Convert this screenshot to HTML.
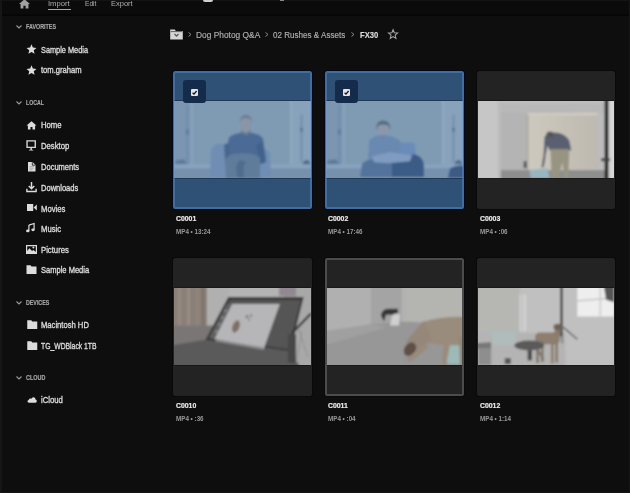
<!DOCTYPE html>
<html><head><meta charset="utf-8">
<style>
html,body{margin:0;padding:0;}
body{width:630px;height:493px;background:#0e0e0e;position:relative;overflow:hidden;font-family:"Liberation Sans",sans-serif;}
.a{position:absolute;white-space:nowrap;line-height:10px;transform-origin:0 0;}
.ico{position:absolute;overflow:visible;}
.menu{font-size:7.8px;color:#b0b0b0;}
.sec{font-size:6.8px;font-weight:bold;color:#a8a8a8;-webkit-text-stroke:0.15px #a8a8a8;}
.item{font-size:9.2px;color:#dcdcdc;-webkit-text-stroke:0.35px #dcdcdc;}
.card{position:absolute;width:139px;height:138px;background:#232323;border-radius:2.5px;box-shadow:0 0 0 1px #0a0a0a;}
.card.sel{background:#2e5175;box-shadow:0 0 0 1px #040918;}
.bd{position:absolute;left:0;top:0;width:135px;height:134px;border:2px solid transparent;border-radius:2.5px;z-index:2;}
.sel .bd{border-color:rgba(105,155,230,0.38);}
.hov .bd{border-color:#4c4c4c;}
.img{position:absolute;left:1px;top:30px;width:137px;height:77px;overflow:hidden;box-shadow:0 -1px 0 rgba(0,0,0,0.3),0 1px 0 rgba(0,0,0,0.3);}
.title{font-size:8px;font-weight:bold;color:#ececec;-webkit-text-stroke:0.2px #ececec;}
.sub{font-size:6.6px;font-weight:bold;color:#999;}
.crumb{font-size:8.5px;color:#b0b0b0;-webkit-text-stroke:0.15px #b0b0b0;}
</style></head>
<body>
<div style="position:absolute;left:0;top:0;width:630px;height:14px;background:#0b0b0b"></div>
<div style="position:absolute;left:0;top:0;width:630px;height:1px;background:#131313"></div>
<div style="position:absolute;left:0;top:14px;width:630px;height:2px;background:#060606"></div>
<div style="position:absolute;left:203px;top:0;width:10px;height:2px;border-radius:0 0 5px 5px;background:#cfcfcf"></div>
<div style="position:absolute;left:280px;top:0;width:4px;height:1px;background:#888"></div>
<div style="position:absolute;left:0;top:0;width:2px;height:493px;background:#161616"></div>
<div style="position:absolute;left:0;top:492px;width:630px;height:1px;background:#151515"></div>
<div style="position:absolute;left:629px;top:0;width:1px;height:493px;background:#151515"></div>
<svg class="ico" style="left:19px;top:-1px" width="11" height="10" viewBox="0 0 10 9" ><path d="M5 0.2 L10 4.6 L8.6 4.6 L8.6 8.5 L6 8.5 L6 6 L4 6 L4 8.5 L1.4 8.5 L1.4 4.6 L0 4.6 Z" fill="#a0a0a0"/></svg>
<div class="a menu" style="left:48px;top:-0.8px;transform:scaleX(0.98);">Import</div>
<div style="position:absolute;left:48px;top:9px;width:23px;height:1px;background:#a8a8a8"></div>
<div class="a menu" style="left:85px;top:-0.8px;transform:scaleX(0.85);">Edit</div>
<div class="a menu" style="left:111px;top:-0.8px;transform:scaleX(0.96);">Export</div>
<svg class="ico" style="left:15.5px;top:24.8px" width="6" height="4" viewBox="0 0 6 4" ><path d="M0.5 0.5 L3 3 L5.5 0.5" fill="none" stroke="#9a9a9a" stroke-width="1.1"/></svg>
<div class="a sec" style="left:25.5px;top:21.7px;transform:scaleX(0.79);">FAVORITES</div>
<svg class="ico" style="left:25.6px;top:44px" width="11" height="10.2" viewBox="0 0 10 9.6" ><path d="M5 0.3 L6.3 3.4 L9.7 3.7 L7.1 5.9 L7.9 9.3 L5 7.5 L2.1 9.3 L2.9 5.9 L0.3 3.7 L3.7 3.4 Z" fill="#dcdcdc"/></svg>
<div class="a item" style="left:41px;top:44.6px;transform:scaleX(0.8);">Sample Media</div>
<svg class="ico" style="left:25.6px;top:64.9px" width="11" height="10.2" viewBox="0 0 10 9.6" ><path d="M5 0.3 L6.3 3.4 L9.7 3.7 L7.1 5.9 L7.9 9.3 L5 7.5 L2.1 9.3 L2.9 5.9 L0.3 3.7 L3.7 3.4 Z" fill="#dcdcdc"/></svg>
<div class="a item" style="left:41px;top:65.3px;transform:scaleX(0.83);">tom.graham</div>
<svg class="ico" style="left:15.5px;top:101.0px" width="6" height="4" viewBox="0 0 6 4" ><path d="M0.5 0.5 L3 3 L5.5 0.5" fill="none" stroke="#9a9a9a" stroke-width="1.1"/></svg>
<div class="a sec" style="left:25.5px;top:97.9px;transform:scaleX(0.76);">LOCAL</div>
<svg class="ico" style="left:26.3px;top:121px" width="11" height="8.5" viewBox="0 0 10 8.5" ><path d="M5 0.2 L10 4.6 L8.6 4.6 L8.6 8.5 L6 8.5 L6 6 L4 6 L4 8.5 L1.4 8.5 L1.4 4.6 L0 4.6 Z" fill="#dcdcdc"/></svg>
<div class="a item" style="left:41px;top:120.10000000000001px;transform:scaleX(0.84);">Home</div>
<svg class="ico" style="left:26.3px;top:140px" width="10.3" height="11" viewBox="0 0 10 10.5" ><path d="M1 0.8 H9 V7 H1 Z" fill="none" stroke="#dcdcdc" stroke-width="1.3"/><path d="M4.3 7 H5.7 V9.3 H7 V10.2 H3 V9.3 H4.3 Z" fill="#dcdcdc"/></svg>
<div class="a item" style="left:41px;top:140.79999999999998px;transform:scaleX(0.84);">Desktop</div>
<svg class="ico" style="left:28px;top:162px" width="7.5" height="9.5" viewBox="0 0 7.5 9.5" ><path d="M0 0 H4.5 L7.5 3 V9.5 H0 Z" fill="#dcdcdc"/><path d="M4.3 0.2 V3.2 H7.3" fill="none" stroke="#0e0e0e" stroke-width="0.8"/><path d="M1.6 4.6 H5.9 M1.6 6.2 H5.9 M1.6 7.8 H4.5" stroke="#8a8a8a" stroke-width="0.6"/></svg>
<div class="a item" style="left:41px;top:161.7px;transform:scaleX(0.82);">Documents</div>
<svg class="ico" style="left:25.8px;top:182.3px" width="11" height="10" viewBox="0 0 10 9.5" ><path d="M5 0 V6.2 M2.4 3.8 L5 6.4 L7.6 3.8" fill="none" stroke="#dcdcdc" stroke-width="1.4"/><path d="M0.6 6.5 V9 H9.4 V6.5" fill="none" stroke="#dcdcdc" stroke-width="1.3"/></svg>
<div class="a item" style="left:41px;top:183.1px;transform:scaleX(0.82);">Downloads</div>
<svg class="ico" style="left:26.9px;top:204.2px" width="9.8" height="7" viewBox="0 0 9.8 6.8" ><path d="M0 0 H6.2 V6.8 H0 Z M6.6 3.4 L9.8 0.4 V6.4 Z" fill="#dcdcdc"/></svg>
<div class="a item" style="left:41px;top:203.7px;transform:scaleX(0.84);">Movies</div>
<svg class="ico" style="left:26.3px;top:223px" width="9" height="10" viewBox="0 0 10 10" ><path d="M3.2 1.8 L9 0 V6.8" fill="none" stroke="#dcdcdc" stroke-width="1.3"/><path d="M3.2 1.8 V8" fill="none" stroke="#dcdcdc" stroke-width="1.3"/><ellipse cx="2" cy="8.2" rx="1.9" ry="1.5" fill="#dcdcdc"/><ellipse cx="7.8" cy="7" rx="1.9" ry="1.5" fill="#dcdcdc"/></svg>
<div class="a item" style="left:41px;top:223.89999999999998px;transform:scaleX(0.84);">Music</div>
<svg class="ico" style="left:26px;top:244.5px" width="11" height="9" viewBox="0 0 11 9" ><path d="M0.6 0.6 H10.4 V8.4 H0.6 Z" fill="none" stroke="#dcdcdc" stroke-width="1.2"/><path d="M1 8 L1 6 L3.5 3.3 L6 6 L7.3 5 L10 7 V8 Z" fill="#dcdcdc"/><circle cx="7.4" cy="2.6" r="1" fill="#dcdcdc"/></svg>
<div class="a item" style="left:41px;top:244.6px;transform:scaleX(0.84);">Pictures</div>
<svg class="ico" style="left:26px;top:265.2px" width="11" height="9" viewBox="0 0 10 9" ><path d="M0 0.3 H4 L5 1.6 H10 V9 H0 Z" fill="#dcdcdc"/></svg>
<div class="a item" style="left:41px;top:265.4px;transform:scaleX(0.82);">Sample Media</div>
<svg class="ico" style="left:15.5px;top:300.7px" width="6" height="4" viewBox="0 0 6 4" ><path d="M0.5 0.5 L3 3 L5.5 0.5" fill="none" stroke="#9a9a9a" stroke-width="1.1"/></svg>
<div class="a sec" style="left:25.5px;top:297.59999999999997px;transform:scaleX(0.78);">DEVICES</div>
<svg class="ico" style="left:26.5px;top:319.9px" width="10.5" height="9" viewBox="0 0 10 9" ><path d="M0 0.3 H4 L5 1.6 H10 V9 H0 Z" fill="#dcdcdc"/></svg>
<div class="a item" style="left:41px;top:319.8px;transform:scaleX(0.83);">Macintosh HD</div>
<svg class="ico" style="left:26.5px;top:341px" width="10.5" height="9" viewBox="0 0 10 9" ><path d="M0 0.3 H4 L5 1.6 H10 V9 H0 Z" fill="#dcdcdc"/></svg>
<div class="a item" style="left:41px;top:340.59999999999997px;transform:scaleX(0.74);">TG_WDBlack 1TB</div>
<svg class="ico" style="left:15.5px;top:376.1px" width="6" height="4" viewBox="0 0 6 4" ><path d="M0.5 0.5 L3 3 L5.5 0.5" fill="none" stroke="#9a9a9a" stroke-width="1.1"/></svg>
<div class="a sec" style="left:25.5px;top:373.0px;transform:scaleX(0.8);">CLOUD</div>
<svg class="ico" style="left:26.5px;top:396.4px" width="10" height="7" viewBox="0 0 10 6.6" ><path d="M1.8 6.5 C0.2 6.5 0 4.2 1.6 3.9 C2 2.2 3.6 1.8 4.6 2.6 C5.3 0.3 8.4 0.6 8.5 3.3 C10.2 3.4 10.2 6.5 8.6 6.5 Z" fill="#dcdcdc"/></svg>
<div class="a item" style="left:41px;top:395.4px;transform:scaleX(0.84);">iCloud</div>
<svg class="ico" style="left:170.3px;top:29.4px" width="13" height="10.6" viewBox="0 0 12.6 10.6" ><path d="M0 0.6 H4.6 L5.6 2 H12.6 V10.6 H0 Z" fill="#d6d6d6"/><path d="M0.6 2.6 H12 " stroke="#0f0f0f" stroke-width="0.6"/><path d="M4.3 5 L6.3 7.2 L8.3 5" fill="none" stroke="#555" stroke-width="1.2"/></svg>
<svg class="ico" style="left:187.5px;top:32px" width="4" height="5" viewBox="0 0 4 5" ><path d="M0.5 0.5 L3 2.5 L0.5 4.5" fill="none" stroke="#8a8a8a" stroke-width="1"/></svg>
<div class="a crumb" style="left:196px;top:30.0px;transform:scaleX(0.985);">Dog Photog Q&amp;A</div>
<svg class="ico" style="left:264.8px;top:32px" width="4" height="5" viewBox="0 0 4 5" ><path d="M0.5 0.5 L3 2.5 L0.5 4.5" fill="none" stroke="#8a8a8a" stroke-width="1"/></svg>
<div class="a crumb" style="left:273px;top:30.0px;transform:scaleX(0.95);">02 Rushes &amp; Assets</div>
<svg class="ico" style="left:351.3px;top:32px" width="4" height="5" viewBox="0 0 4 5" ><path d="M0.5 0.5 L3 2.5 L0.5 4.5" fill="none" stroke="#8a8a8a" stroke-width="1"/></svg>
<div class="a crumb" style="left:359.5px;top:30.0px;transform:scaleX(0.9);font-weight:bold;color:#e4e4e4">FX30</div>
<svg class="ico" style="left:388px;top:29.2px" width="10.2" height="10.4" viewBox="0 0 10 10" ><path d="M5 0.6 L6.2 3.6 L9.5 3.8 L7 5.9 L7.8 9.2 L5 7.4 L2.2 9.2 L3 5.9 L0.5 3.8 L3.8 3.6 Z" fill="none" stroke="#a8a8a8" stroke-width="1"/></svg>
<div class="card sel" style="left:173px;top:71px"><div class="img"><svg width="100%" height="77" viewBox="0 0 137 78" preserveAspectRatio="none" style="display:block"><defs><filter id="bf0" x="-5%" y="-5%" width="110%" height="110%"><feGaussianBlur stdDeviation="1.1"/></filter></defs><g filter="url(#bf0)">
<rect x="-2" y="-2" width="141" height="82" fill="#7f9bb3"/>
<rect x="-2" y="-2" width="19" height="82" fill="#7b96b2"/>
<rect x="16.5" y="-2" width="2.5" height="82" fill="#88a2ba"/>
<rect x="12.6" y="4" width="1.6" height="62" fill="#6c89a8"/>
<rect x="11.6" y="29" width="3.5" height="5" fill="#5f7f9f"/>
<path d="M0 68 L2 60 L10 59 L13 64 L12 69 Z" fill="#5d7a9a"/>
<rect x="116.7" y="-2" width="23" height="82" fill="#87a2ba"/>
<rect x="116" y="-2" width="2" height="82" fill="#90a9c0"/>
<rect x="126.8" y="14" width="1.4" height="48" fill="#6a86a6"/>
<rect x="126" y="27" width="3" height="4" fill="#5c7898"/>
<path d="M128 66 Q129 59 134 60 Q138 63 136 67 Z" fill="#4e6a8c"/>
<rect x="-2" y="64" width="141" height="5" fill="#88a3bd"/>
<rect x="-2" y="68.5" width="141" height="1.2" fill="#6e8aa8"/>
<rect x="-2" y="69.5" width="141" height="10" fill="#7791ad"/>

<path d="M36 77 L37 50 Q39 43 46 43 L53 45 L55 60 L82 60 L84 49 Q92 47 96 52 L97 77 Z" fill="#6f8eb4"/>
<path d="M55 37 Q60 32 72 32 Q85 32 89 38 L92 60 L84 62 L58 62 L51 58 Z" fill="#4b6b95"/>
<path d="M50 44 L55 42 L56 60 L51 60 Z" fill="#46668f"/>
<path d="M82 44 L89 41 L92 62 L86 64 Z" fill="#42628c"/>
<path d="M51 60 Q53 53 66 53 Q82 52 86 58 L86 78 L52 78 Z" fill="#5e7b9b"/>
<path d="M66 60 Q60 64 64 78 L70 78 Q68 66 72 62 Z" fill="#4f6c8e"/>
<ellipse cx="72" cy="25" rx="6.3" ry="9" fill="#8896a8"/>
<path d="M65.5 22 Q66 14 72 14 Q78 14 78.5 22 L77 19 Q72 16 67 19 Z" fill="#6f7f94"/>
<path d="M67 29 Q72 35 77 29 L77 32 Q72 36 67 32 Z" fill="#6a7a90"/>
</g></svg></div><div style="position:absolute;left:10px;top:9px;width:23px;height:23px;border-radius:3px;background:#142b4b"></div><div style="position:absolute;left:18px;top:17.5px;width:7px;height:7px;border-radius:1px;background:#e4e4e4"></div><svg style="position:absolute;left:18px;top:17.5px" width="7" height="7" viewBox="0 0 7 7"><path d="M1.6 3.7 L3 5.1 L5.6 2" fill="none" stroke="#151515" stroke-width="1.3"/></svg><div class="bd"></div></div>
<div class="a title" style="left:176px;top:213.5px;transform:scaleX(0.86);">C0001</div>
<div class="a sub" style="left:176px;top:227px;transform:scaleX(0.95);">MP4 • 13:24</div>
<div class="card sel" style="left:325px;top:71px"><div class="img"><svg width="100%" height="77" viewBox="0 0 137 78" preserveAspectRatio="none" style="display:block"><defs><filter id="bf1" x="-5%" y="-5%" width="110%" height="110%"><feGaussianBlur stdDeviation="1.1"/></filter></defs><g filter="url(#bf1)">
<rect x="-2" y="-2" width="141" height="82" fill="#7f9bb3"/>
<rect x="-2" y="-2" width="19" height="82" fill="#7b96b2"/>
<rect x="16.5" y="-2" width="2.5" height="82" fill="#88a2ba"/>
<rect x="12.6" y="4" width="1.6" height="62" fill="#6c89a8"/>
<rect x="11.6" y="29" width="3.5" height="5" fill="#5f7f9f"/>
<path d="M0 68 L2 60 L10 59 L13 64 L12 69 Z" fill="#5d7a9a"/>
<rect x="116.7" y="-2" width="23" height="82" fill="#87a2ba"/>
<rect x="116" y="-2" width="2" height="82" fill="#90a9c0"/>
<rect x="126.8" y="14" width="1.4" height="48" fill="#6a86a6"/>
<rect x="126" y="27" width="3" height="4" fill="#5c7898"/>
<path d="M128 66 Q129 59 134 60 Q138 63 136 67 Z" fill="#4e6a8c"/>
<rect x="-2" y="64" width="141" height="5" fill="#88a3bd"/>
<rect x="-2" y="68.5" width="141" height="1.2" fill="#6e8aa8"/>
<rect x="-2" y="69.5" width="141" height="10" fill="#7791ad"/>

<path d="M122 78 L124 68 Q132 64 139 66 L139 78 Z" fill="#3a5a84"/>
<path d="M73 42 L88 42 Q90 46 89.7 55 L74 55 Z" fill="#6a8cba"/>
<path d="M43 40 Q50 34 57 34.5 Q68 35 74 40 L75 62 L42 62 Z" fill="#6b89b1"/>
<path d="M34 77 L36 64 Q40 58 52 60 L67 62 L67 77 Z" fill="#52729c"/>
<path d="M66 58 L88 54 Q98 56 98 66 L98 77 L66 77 Z" fill="#3b5b87"/>
<path d="M46 56 L64 52 L86 55 L84 61 L62 63 L48 62 Z" fill="#7f9cc0"/>
<ellipse cx="57.3" cy="27.5" rx="6.8" ry="7.3" fill="#8a98aa"/>
<path d="M50.3 30 Q49.5 20 57 19.8 Q65 20 64.3 30 L62.5 25 Q57 22.5 52 25 Z" fill="#566a84"/>
</g></svg></div><div style="position:absolute;left:10px;top:9px;width:23px;height:23px;border-radius:3px;background:#142b4b"></div><div style="position:absolute;left:18px;top:17.5px;width:7px;height:7px;border-radius:1px;background:#e4e4e4"></div><svg style="position:absolute;left:18px;top:17.5px" width="7" height="7" viewBox="0 0 7 7"><path d="M1.6 3.7 L3 5.1 L5.6 2" fill="none" stroke="#151515" stroke-width="1.3"/></svg><div class="bd"></div></div>
<div class="a title" style="left:328px;top:213.5px;transform:scaleX(0.86);">C0002</div>
<div class="a sub" style="left:328px;top:227px;transform:scaleX(0.95);">MP4 • 17:46</div>
<div class="card " style="left:477px;top:71px;width:138px"><div class="img" style="width:136px"><svg width="100%" height="77" viewBox="0 0 137 78" preserveAspectRatio="none" style="display:block"><defs><filter id="bf2" x="-5%" y="-5%" width="110%" height="110%"><feGaussianBlur stdDeviation="1.1"/></filter></defs><g filter="url(#bf2)">
<rect x="-2" y="-2" width="141" height="82" fill="#bcbcbc"/>
<rect x="22" y="-2" width="30" height="72" fill="#b4b4b4"/>
<rect x="22" y="-2" width="115" height="14" fill="#b8b8b8"/>
<rect x="22" y="0" width="115" height="2" fill="#c0c0c0"/>
<defs><linearGradient id="bdg" x1="0" y1="0" x2="1" y2="0"><stop offset="0" stop-color="#cdc9be"/><stop offset="1" stop-color="#bdb9b0"/></linearGradient></defs><path d="M50 14 L120 11 L121 71 L50 71 Z" fill="url(#bdg)"/>
<rect x="50" y="12" width="70" height="2.5" fill="#d0ccc2"/>
<rect x="49" y="14" width="2" height="57" fill="#aeaca5"/>
<rect x="20" y="70" width="119" height="10" fill="#8e8e8e"/>
<rect x="-2" y="-2" width="24" height="82" fill="#c6c6c6"/>
<rect x="20" y="-2" width="3" height="82" fill="#bcbcbc"/>
<path d="M52 70 L70 68 L72 78 L53 78 Z" fill="#98b6c0"/>
<rect x="46" y="61" width="3" height="7" fill="#555"/>
<path d="M67 36 Q71 32 78 32 Q88 33 92 40 L94 50 L88 51 L72 50 L70 45 L68 56 L66 56 Z" fill="#5a6070"/>
<path d="M66 55 L68 57 L66 67 L64 67 Z" fill="#4e5464"/>
<ellipse cx="72.5" cy="34" rx="3.6" ry="3" fill="#555"/>
<path d="M73 49 L92 49 L91 78 L87 78 L85 62 L81 78 L74 78 Z" fill="#989482"/>
<rect x="127.6" y="-2" width="4.2" height="82" fill="#1c1c1c"/>
<rect x="131.5" y="-2" width="8" height="82" fill="#d6d6d6"/>
<rect x="124" y="58" width="9" height="3" fill="#444"/>
</g></svg></div><div class="bd" style="width:134px"></div></div>
<div class="a title" style="left:480px;top:213.5px;transform:scaleX(0.86);">C0003</div>
<div class="a sub" style="left:480px;top:227px;transform:scaleX(0.95);">MP4 • :06</div>
<div class="card " style="left:173px;top:258px"><div class="img"><svg width="100%" height="77" viewBox="0 0 137 78" preserveAspectRatio="none" style="display:block"><defs><filter id="bf3" x="-5%" y="-5%" width="110%" height="110%"><feGaussianBlur stdDeviation="1.1"/></filter></defs><g filter="url(#bf3)">
<rect x="-2" y="-2" width="141" height="82" fill="#a0a0a0"/>
<rect x="-2" y="-2" width="36" height="42" fill="#8a8078"/>
<rect x="4" y="-2" width="3" height="42" fill="#958b82"/>
<rect x="13" y="-2" width="3" height="42" fill="#978d84"/>
<rect x="22" y="-2" width="3" height="42" fill="#8f857c"/>
<rect x="28" y="-2" width="2" height="42" fill="#7a7068"/>
<rect x="33" y="-2" width="22" height="42" fill="#b0b0b0"/>
<rect x="55" y="-2" width="55" height="12" fill="#b4b4b4"/>
<rect x="105" y="-2" width="23" height="10" fill="#928890"/>
<rect x="-2" y="38" width="60" height="25" fill="#7a7676"/>
<rect x="122" y="-2" width="17" height="82" fill="#a8a8a8"/>
<path d="M-2 58 L31.5 52.4 L117 64 L126 80 L-2 80 Z" fill="#5a5a5a"/>
<path d="M54.3 9 L129.6 9 L116.2 64 L31.5 52.4 Z" fill="#363636"/>
<path d="M56 12 L127 12 L114.5 62 L34 51 Z" fill="#555555"/>
<path d="M58.1 16.2 L105.8 16.2 L89.6 62 L40 51.5 Z" fill="#b6b6b8"/>
<path d="M42 52 L89 60 L88.5 62.5 L41 54 Z" fill="#8a8a8a"/>
<path d="M53 16 L58 16 L41 51 L36 51 Z" fill="#626262"/>
<rect x="50" y="22" width="3" height="2" fill="#8a8a8a"/><rect x="47" y="29" width="3" height="2" fill="#8a8a8a"/><rect x="44" y="36" width="3" height="2" fill="#8a8a8a"/><rect x="41" y="43" width="3" height="2" fill="#8a8a8a"/>
<ellipse cx="62" cy="39" rx="3.5" ry="6.5" fill="#7e7068" transform="rotate(20 62 39)"/>
<circle cx="73" cy="29" r="1.3" fill="#6a6a6a"/><circle cx="77" cy="28" r="1.1" fill="#6a6a6a"/><circle cx="75" cy="32" r="1.1" fill="#7a7a7a"/>
<path d="M137 25.8 L118 45.8" stroke="#303030" stroke-width="2.4"/>
<rect x="114" y="46.7" width="8" height="29" fill="#474747"/>
<path d="M124 40 L134 70 M128 44 L122 76" stroke="#8a8a8a" stroke-width="0.8"/>
</g></svg></div><div class="bd"></div></div>
<div class="a title" style="left:176px;top:400.5px;transform:scaleX(0.86);">C0010</div>
<div class="a sub" style="left:176px;top:414px;transform:scaleX(0.95);">MP4 • :36</div>
<div class="card hov" style="left:325px;top:258px"><div class="img"><svg width="100%" height="77" viewBox="0 0 137 78" preserveAspectRatio="none" style="display:block"><defs><filter id="bf4" x="-5%" y="-5%" width="110%" height="110%"><feGaussianBlur stdDeviation="1.1"/></filter></defs><g filter="url(#bf4)">
<rect x="-2" y="-2" width="141" height="82" fill="#979797"/>
<path d="M-2 -2 L45.5 -2 L45.5 36.7 L-2 44 Z" fill="#b0b0b0"/>
<path d="M45.5 -2 L76.7 -2 L76.7 34 L45.5 36.7 Z" fill="#a4a4a4"/>
<rect x="76" y="-2" width="1.5" height="36" fill="#b8b8b8"/>
<path d="M77.5 -2 L139 -2 L139 36.7 L77.5 34 Z" fill="#b4b4b0"/>
<path d="M-2 44 L45.5 36.7 L60 40 L-2 58 Z" fill="#a0a0a0"/>
<path d="M55 28 Q56 21 62 21 L72 21 L72 27 L60 27 L58 34 Z" fill="#363636"/>
<path d="M64 38 L66 28 Q70 24 74 27 L73 38 Z" fill="#cfcfcf"/>
<path d="M118 50 Q137 44 137 54 L137 77 L122 77 Q114 64 118 50 Z" fill="#9dbab8"/>
<path d="M96 35 Q110 29 136 29 L139 30 L139 58 L124 58 L120 78 L116 78 L117 58 L102 56 Q94 50 95 40 Z" fill="#9a8c7c"/>
<path d="M133 50 L139 50 L139 78 L134 78 Z" fill="#948676"/>
<path d="M98 33 Q88 44 80 55 L88 65 L106 52 Z" fill="#95877a"/>
<ellipse cx="84" cy="62" rx="5.5" ry="7.5" fill="#5e5046" transform="rotate(35 84 62)"/>
<path d="M80 72 L100 56 L103 60 L84 75 Z" fill="#998b7b"/>
</g></svg></div><div class="bd"></div></div>
<div class="a title" style="left:328px;top:400.5px;transform:scaleX(0.86);">C0011</div>
<div class="a sub" style="left:328px;top:414px;transform:scaleX(0.95);">MP4 • :04</div>
<div class="card " style="left:477px;top:258px;width:138px"><div class="img" style="width:136px"><svg width="100%" height="77" viewBox="0 0 137 78" preserveAspectRatio="none" style="display:block"><defs><filter id="bf5" x="-5%" y="-5%" width="110%" height="110%"><feGaussianBlur stdDeviation="1.1"/></filter></defs><g filter="url(#bf5)">
<rect x="-2" y="-2" width="141" height="82" fill="#b4b4b4"/>
<rect x="-2" y="-2" width="141" height="47.5" fill="#c0c0c0"/>
<rect x="-2" y="-2" width="44" height="47.5" fill="#b6b6b2"/>
<path d="M88 45.5 L139 44 L139 80 L88 80 Z" fill="#c0c0c0"/>
<rect x="100" y="-2" width="37" height="30.9" fill="#eeeeee"/>
<path d="M100 13 L137 10" stroke="#bdbdbd" stroke-width="1.2"/>
<rect x="122.5" y="-2" width="1.3" height="30.9" fill="#c4c4c4"/>
<path d="M126.7 -2 L137 -2 L137 14.4 L129 12 Z" fill="#555555"/>
<rect x="41.8" y="6.7" width="6.6" height="36.6" fill="#d2d2d2"/>
<rect x="44" y="6.7" width="1.2" height="36.6" fill="#b6b6b6"/>
<rect x="82.7" y="-2" width="2.8" height="51" fill="#4e4e4e"/>
<path d="M85 39 L100 52" stroke="#555" stroke-width="1.3"/>
<path d="M84 40 L85 56" stroke="#555" stroke-width="1.1"/>
<rect x="57.5" y="45" width="25" height="12" rx="5" fill="#8e7e6e"/>
<rect x="58.5" y="54" width="3" height="22" fill="#8a7a6a"/>
<rect x="63.5" y="54" width="2.5" height="21" fill="#857565"/>
<rect x="73.5" y="54" width="2.6" height="22.5" fill="#8a7a6a"/>
<rect x="78" y="54" width="2.5" height="21.5" fill="#857565"/>
<path d="M76 48 L78 40 L84 40 L82 49 Z" fill="#8a7a6a"/>
<ellipse cx="80.5" cy="39.5" rx="4.5" ry="3.2" fill="#6e6258"/>
<path d="M14.4 43.3 L37.8 43.3 L37.8 57.8 L14.4 57.8 Z" fill="#b0bcbc"/>
<path d="M0 56 L13.3 55.5 L13.3 78 L0 78 Z" fill="#8e8e8e"/>
<path d="M-2 56 L13 55 L13 61 L-2 61 Z" fill="#777"/>
<ellipse cx="51.7" cy="58.3" rx="15" ry="5" fill="#5a5a5a"/>
<rect x="50" y="63" width="4.4" height="10.3" fill="#4c4c4c"/>
<path d="M60 62 L66 73" stroke="#666" stroke-width="1.4"/>
<rect x="27" y="71" width="6" height="6" fill="#555"/>
</g></svg></div><div class="bd" style="width:134px"></div></div>
<div class="a title" style="left:480px;top:400.5px;transform:scaleX(0.86);">C0012</div>
<div class="a sub" style="left:480px;top:414px;transform:scaleX(0.95);">MP4 • 1:14</div>
</body></html>
